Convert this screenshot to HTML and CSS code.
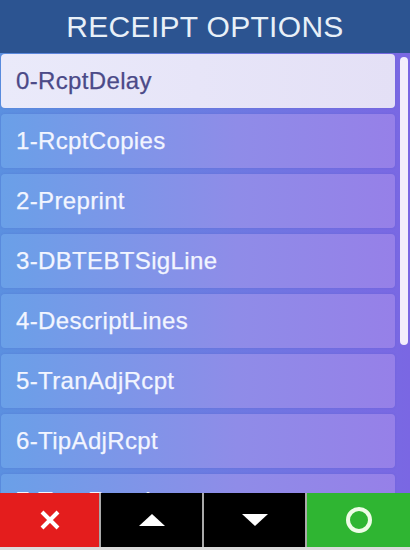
FILE: index.html
```html
<!DOCTYPE html>
<html>
<head>
<meta charset="utf-8">
<link rel="stylesheet" href="styles.css">
</head>
<body>
<div class="screen">
  <header class="title">RECEIPT OPTIONS</header>
  <div class="list-area">
    <div class="list">
      <div class="row selected">0-RcptDelay</div>
      <div class="row">1-RcptCopies</div>
      <div class="row">2-Preprint</div>
      <div class="row">3-DBTEBTSigLine</div>
      <div class="row">4-DescriptLines</div>
      <div class="row">5-TranAdjRcpt</div>
      <div class="row">6-TipAdjRcpt</div>
      <div class="row">7-TranReceipt</div>
    </div>
    <div class="scroll-thumb"></div>
  </div>
  <nav class="buttons">
    <div class="btn cancel">
      <svg width="22" height="22" viewBox="0 0 22 22"><path d="M3 3 L19 19 M19 3 L3 19" stroke="#fff" stroke-width="4" stroke-linecap="butt"/></svg>
    </div>
    <div class="btn dark">
      <svg width="26" height="12" viewBox="0 0 26 12"><polygon points="13,0 26,12 0,12" fill="#fff"/></svg>
    </div>
    <div class="btn dark">
      <svg width="26" height="12" viewBox="0 0 26 12"><polygon points="0,0 26,0 13,12" fill="#fff"/></svg>
    </div>
    <div class="btn ok">
      <svg width="28" height="28" viewBox="0 0 28 28"><circle cx="14" cy="14" r="11" fill="none" stroke="#eefce6" stroke-width="4"/></svg>
    </div>
  </nav>
</div>
</body>
</html>
```
FILE: styles.css
```css
html, body {
  margin: 0;
  padding: 0;
  background: #dcdcdc;
}
.screen {
  width: 410px;
  height: 550px;
  display: flex;
  flex-direction: column;
  overflow: hidden;
  font-family: "Liberation Sans", Arial, sans-serif;
}
.title {
  height: 53px;
  flex: none;
  background: #2c5491;
  color: #e8f0f8;
  font-size: 30px;
  letter-spacing: 0.3px;
  display: flex;
  align-items: center;
  justify-content: center;
  padding-top: 1px;
  box-sizing: border-box;
}
.list-area {
  height: 440px;
  flex: none;
  display: flex;
  align-items: flex-start;
  gap: 5px;
  padding-left: 1px;
  overflow: hidden;
  background: linear-gradient(to right, #5b90e0, #7a67e3);
}
.list {
  width: 394px;
  flex: none;
  display: flex;
  flex-direction: column;
  gap: 6px;
  padding-top: 1px;
}
.row {
  height: 54px;
  flex: none;
  border-radius: 4px;
  background: linear-gradient(to right, #6aa0e8, #8f8ce8 60%, #9680e8);
  box-shadow: 0 0 2px rgba(80, 90, 200, 0.35);
  color: #f2f5ff;
  font-size: 24px;
  letter-spacing: 0.35px;
  -webkit-text-stroke: 0.25px currentColor;
  display: flex;
  align-items: center;
  padding-left: 15px;
  box-sizing: border-box;
}
.row.selected {
  background: linear-gradient(to right, #eaeafa, #e4e0f6);
  color: #4b4a88;
}
.scroll-thumb {
  width: 8px;
  height: 288px;
  margin-top: 4px;
  border-radius: 4px;
  background: #f3eefc;
  flex: none;
}
.buttons {
  height: 54px;
  flex: none;
  display: grid;
  grid-template-columns: 99px 101px 101px 1fr;
  gap: 2px;
  background: #a9a9a9;
  border-bottom: 3px solid #dcdcdc;
}
.btn {
  display: flex;
  align-items: center;
  justify-content: center;
}
.cancel { background: #e41d1d; }
.dark { background: #000; }
.ok { background: #2fb532; }
```
